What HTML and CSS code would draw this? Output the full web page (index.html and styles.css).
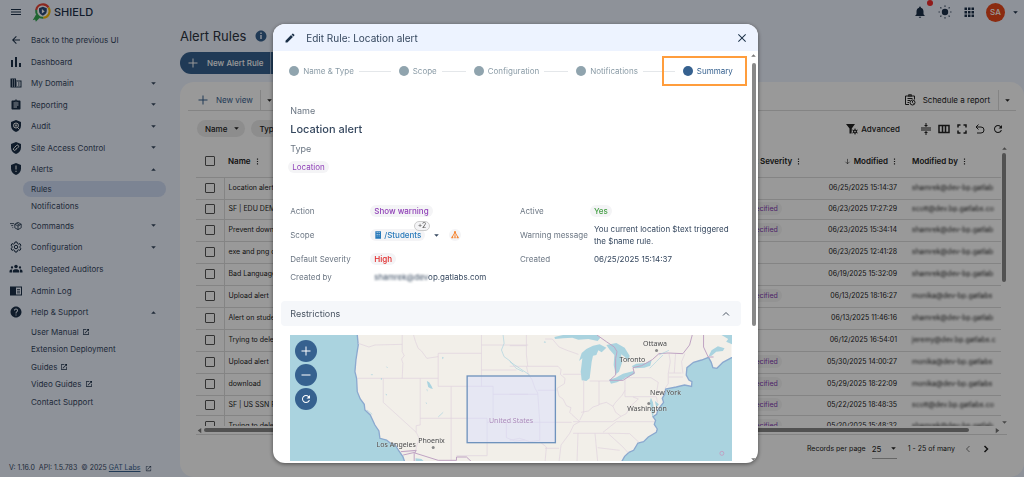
FILE: index.html
```html
<!DOCTYPE html>
<html lang="en">
  <head>
    <meta charset="UTF-8" />
    <meta name="viewport" content="width=device-width, initial-scale=1.0" />
    <title>SHIELD - Alert Rules</title>
    <link rel="stylesheet" href="styles.css">
  </head>
  <body>
    <svg class="sprite" aria-hidden="true">
      <symbol id="menu" viewBox="0 0 24 24"><path d="M2 18h20v-2H2zM2 13h20v-2H2zM2 8h20V6H2z" /></symbol>
      <symbol id="back" viewBox="0 0 24 24"><path d="M20 11H7.83l5.59-5.59L12 4l-8 8 8 8 1.41-1.41L7.83 13H20v-2z" /></symbol>
      <symbol id="chart" viewBox="0 0 24 24"><path d="M2 8h4v14H2zM10 2h4v20h-4zM18 14h4v8h-4z" /></symbol>
      <symbol id="domain" viewBox="0 0 24 24"><path d="M12 7V3H1v18h22V7H12zM6 19H4v-2h2v2zm0-4H4v-2h2v2zm0-4H4V9h2v2zm0-4H4V5h2v2zm4 12H8v-2h2v2zm0-4H8v-2h2v2zm0-4H8V9h2v2zm0-4H8V5h2v2zm11 12h-9v-2h2v-2h-2v-2h2v-2h-2V9h9v10zm-2-8h-3v2h3v-2zm0 4h-3v2h3v-2z" /></symbol>
      <symbol id="report" viewBox="0 0 24 24"><path d="M19 3h-4.18C14.4 1.84 13.3 1 12 1c-1.3 0-2.4.84-2.82 2H5c-1.1 0-2 .9-2 2v14c0 1.1.9 2 2 2h14c1.1 0 2-.9 2-2V5c0-1.1-.9-2-2-2zm-7 0c.55 0 1 .45 1 1s-.45 1-1 1-1-.45-1-1 .45-1 1-1zm2 14H7v-2h7v2zm3-4H7v-2h10v2zm0-4H7V7h10v2z" /></symbol>
      <symbol id="audit" viewBox="0 0 24 24">
        <path d="M12 0 2 4v7c0 6 4 11 10 13 6-2 10-7 10-13V4z" />
        <circle class="knock" cx="12" cy="11" r="5" /><circle class="knock" cx="12" cy="11" r="1.5" /><path class="knock" d="m15 15 4 4" />
      </symbol>
      <symbol id="access" viewBox="0 0 24 24">
        <path d="M12 0 2 4v7c0 6 4 11 10 13 6-2 10-7 10-13V4z" />
        <path class="knock" d="m10 10 3-3a2.4 2.4 0 0 1 3.500 3.500l-2 2M14 12l-3 4a2.400 2.400 0 0 1-3.500-3.500l2-2" />
      </symbol>
      <symbol id="alert" viewBox="0 0 24 24">
        <path d="M12 0 2 4v7c0 6 4 11 10 13 6-2 10-7 10-13V4z" />
        <path class="knock" d="M12 5v8M12 15.500v2.500" />
      </symbol>
      <symbol id="commands" viewBox="0 0 30 24">
        <path class="line" d="M0 6h10M3 11h5M6 16h2M20 3l8 4.500v9L20 21l-8-4.500v-9zM12 7.500l8 4.500 8-4.500M20 12v9M16 5l8 4.500" />
      </symbol>
      <symbol id="gear" viewBox="0 0 24 24">
        <path class="line" d="M10 2h4l.7 3 2.300 1.300 3-1 2 3.500-2.300 2v2.400l2.300 2-2 3.500-3-1L14.700 19l-.7 3h-4l-.7-3L7 17.700l-3 1-2-3.500 2.300-2v-2.400L2 8.800l2-3.500 3 1L9.300 5z" />
        <circle class="line" cx="12" cy="12" r="3.500" />
      </symbol>
      <symbol id="groups" viewBox="0 0 24 24">
        <circle cx="12" cy="7" r="3.500" /><circle cx="4" cy="9" r="2.300" /><circle cx="20" cy="9" r="2.300" />
        <path d="M5.500 19v-3c0-5 13-5 13 0v3zM-1 19v-3c0-2 2-3.500 5.500-3.200C3.800 14 4 16 4 19zM25 19v-3c0-2-2-3.500-5.500-3.200.7 1.200.5 3.200.5 6.200z" />
      </symbol>
      <symbol id="log" viewBox="0 0 24 24"><path fill-rule="evenodd" d="M0 3h24v18H0zM12 5v14h10V5zM14 8h6v1.500h-6zM14 11.500h6V13h-6zM14 15h6v1.500h-6z" /></symbol>
      <symbol id="help" viewBox="0 0 24 24"><path d="M12 1C6 1 1 6 1 12s5 11 11 11 11-5 11-11S18 1 12 1zm1 18h-2v-2h2v2zm2.070-7.750l-.9.920C13.450 12.900 13 13.500 13 15h-2v-.5c0-1.100.45-2.100 1.170-2.830l1.240-1.260c.37-.36.59-.86.59-1.410 0-1.100-.9-2-2-2s-2 .9-2 2H8c0-2.210 1.790-4 4-4s4 1.790 4 4c0 .88-.36 1.680-.93 2.250z" /></symbol>
      <symbol id="info" viewBox="0 0 24 24"><path d="M12 1C6 1 1 6 1 12s5 11 11 11 11-5 11-11S18 1 12 1zm1.500 17h-3v-8h3v8zm0-10h-3V5h3v3z" /></symbol>
      <symbol id="external" viewBox="0 0 24 24"><path d="M19 19H5V5h7V3H5c-1.110 0-2 .9-2 2v14c0 1.100.89 2 2 2h14c1.100 0 2-.9 2-2v-7h-2v7zM14 3v2h3.590l-9.830 9.830 1.410 1.410L19 6.410V10h2V3h-7z" /></symbol>
      <symbol id="bell" viewBox="0 0 24 24"><path d="M12 22c1.100 0 2-.9 2-2h-4c0 1.100.89 2 2 2zm6-6v-5c0-3.070-1.640-5.640-4.500-6.320V4c0-.83-.67-1.500-1.500-1.500s-1.500.67-1.500 1.500v.68C7.630 5.360 6 7.920 6 11v5l-2 2v1h16v-1l-2-2z" /></symbol>
      <symbol id="sun" viewBox="0 0 24 24">
        <circle cx="12" cy="12" r="5.500" />
        <path class="line" d="M12 1v2M12 21v2M1 12h2M21 12h2M4.200 4.200l1.500 1.500M18.300 18.300l1.500 1.500M4.200 19.800l1.500-1.500M18.300 5.700l1.500-1.500" />
      </symbol>
      <symbol id="apps" viewBox="0 0 24 24"><path d="M3 3h5v5H3zM10 3h5v5h-5zM17 3h5v5h-5zM3 10h5v5H3zM10 10h5v5h-5zM17 10h5v5h-5zM3 17h5v5H3zM10 17h5v5h-5zM17 17h5v5h-5z" /></symbol>
      <symbol id="edit" viewBox="0 0 24 24"><path d="M3 17.250V21h3.750L17.810 9.940l-3.750-3.750L3 17.250zM20.710 7.040c.39-.39.39-1.020 0-1.410l-2.340-2.340c-.39-.39-1.020-.39-1.410 0l-1.830 1.830 3.750 3.750 1.830-1.830z" /></symbol>
      <symbol id="close" viewBox="0 0 24 24"><path d="M20 5.400 18.600 4 12 10.600 5.400 4 4 5.400l6.600 6.600L4 18.600 5.400 20l6.600-6.600 6.600 6.600 1.400-1.400-6.600-6.600z" /></symbol>
      <symbol id="plus" viewBox="0 0 24 24"><path d="M21 13h-8v8h-2v-8H3v-2h8V3h2v8h8z" /></symbol>
      <symbol id="minus" viewBox="0 0 24 24"><path d="M3 11h18v2H3z" /></symbol>
      <symbol id="refresh" viewBox="0 0 24 24"><path d="M17.650 6.350C16.200 4.900 14.210 4 12 4c-4.420 0-7.990 3.580-7.990 8s3.570 8 7.990 8c3.730 0 6.840-2.550 7.730-6h-2.080c-.82 2.330-3.040 4-5.650 4-3.310 0-6-2.690-6-6s2.690-6 6-6c1.660 0 3.140.69 4.220 1.780L13 11h7V4l-2.350 2.350z" /></symbol>
      <symbol id="undo" viewBox="0 0 24 24"><path class="line" d="M9 3 4 8l5 5M4 8h10a5.500 5.500 0 0 1 0 12H6" /></symbol>
      <symbol id="full" viewBox="0 0 24 24"><path class="line bold-line" d="M4 9V4h5M15 4h5v5M20 15v5h-5M9 20H4v-5" /></symbol>
      <symbol id="columns" viewBox="0 0 24 24"><path class="line bold-line" d="M2 5h20v14H2zM9 5v14M15 5v14" /></symbol>
      <symbol id="density" viewBox="0 0 24 24"><path class="line" d="M2 10h20M2 14h20" /><path d="M11 0h2v4h3l-4 4-4-4h3zM11 24h2v-4h3l-4-4-4 4h3z" /></symbol>
      <symbol id="filter" viewBox="0 0 24 24">
        <path d="M0 2h18l-6.500 9v4L11 21H7V11z" />
        <circle cx="18" cy="17" r="4" /><path class="line" d="M18 11v12M12.800 14l10.400 6M12.800 20l10.400-6" /><circle class="knock" cx="18" cy="17" r="1" />
      </symbol>
      <symbol id="schedule" viewBox="0 0 24 24">
        <path class="line" d="M10 21H3V4h18v7M8 4h8M7 9h10M7 13h5M7 17h3M9 3V1.500h6V3" />
        <circle class="line" cx="17" cy="17" r="5" /><path class="line" d="M17 14v3l2 2" />
      </symbol>
      <symbol id="more" viewBox="0 0 24 24"><path d="M10 2h4v4h-4zM10 10h4v4h-4zM10 18h4v4h-4z" /></symbol>
      <symbol id="sort" viewBox="0 0 24 24"><path class="line" d="M12 3v17M5 13l7 7 7-7" /></symbol>
      <symbol id="down" viewBox="0 0 24 24"><path d="M4 8l8 8 8-8z" /></symbol>
      <symbol id="up" viewBox="0 0 24 24"><path d="M4 16l8-8 8 8z" /></symbol>
      <symbol id="left" viewBox="0 0 24 24"><path d="M18 3 6 12l12 9z" /></symbol>
      <symbol id="right" viewBox="0 0 24 24"><path d="m6 3 12 9-12 9z" /></symbol>
      <symbol id="prev" viewBox="0 0 24 24"><path class="line" d="m15 6-6 6 6 6" /></symbol>
      <symbol id="next" viewBox="0 0 24 24"><path class="line bold-line" d="m9 6 6 6-6 6" /></symbol>
      <symbol id="collapse" viewBox="0 0 24 24"><path class="line" d="m6 15 6-6 6 6" /></symbol>
      <symbol id="unit" viewBox="0 0 24 24"><path fill-rule="evenodd" d="M4 1h17v22H4zM8 4v2h3V4zM14 4v2h3V4zM8 9v2h3V9zM14 9v2h3V9zM8 14v2h3v-2zM14 14v2h3v-2z" /></symbol>
      <symbol id="tree" viewBox="0 0 24 24"><path class="line bold-line" d="M12 4 3 19M12 4l9 15M12 10v9" /><path d="M9 1h6v6H9zM1 17h6v5H1zM10 17h4v5h-4zM17 17h6v5h-6z" /></symbol>
    </svg>

    <div class="app">
      <header class="topbar">
        <button class="icon-button" aria-label="Menu"><svg class="icon"><use href="#menu" /></svg></button>
        <a class="brand" href="#">
          <svg class="logo" viewBox="0 0 54 54" aria-hidden="true">
            <path d="M12 32 22 42 11 53 9 47 2 49z" fill="#34a853" />
            <circle cx="31" cy="23" r="20" fill="#fff" />
            <path d="M12 20A19 19 0 0 1 47 13" fill="none" stroke="#ea4335" stroke-width="6" />
            <path d="M47 13A19 19 0 0 1 32 42" fill="none" stroke="#fbbc05" stroke-width="6" />
            <path d="M32 42A19 19 0 0 1 12 20" fill="none" stroke="#34a853" stroke-width="6" />
            <path d="M31 11 20 15v8c0 6 5 11 11 13 6-2 11-7 11-13v-8z" fill="#2b4a78" />
            <path d="M28 17v13l8-6z" fill="#fff" />
          </svg>
          <span>SHIELD</span>
        </a>
        <div class="account">
          <button class="icon-button bell" aria-label="Notifications"><svg class="icon large"><use href="#bell" /></svg><i class="dot"></i></button>
          <button class="icon-button" aria-label="Theme"><svg class="icon large"><use href="#sun" /></svg></button>
          <button class="icon-button" aria-label="Apps"><svg class="icon"><use href="#apps" /></svg></button>
          <button class="avatar">SA</button>
          <button class="icon-button" aria-label="Account menu"><svg class="icon tiny"><use href="#down" /></svg></button>
        </div>
      </header>

      <aside class="sidebar">
        <nav>
          <a href="#"><svg class="icon"><use href="#back" /></svg>Back to the previous UI</a>
          <a href="#"><svg class="icon"><use href="#chart" /></svg>Dashboard</a>
          <a href="#"><svg class="icon"><use href="#domain" /></svg>My Domain<svg class="icon tiny caret"><use href="#down" /></svg></a>
          <a href="#"><svg class="icon"><use href="#report" /></svg>Reporting<svg class="icon tiny caret"><use href="#down" /></svg></a>
          <a href="#"><svg class="icon"><use href="#audit" /></svg>Audit<svg class="icon tiny caret"><use href="#down" /></svg></a>
          <a href="#"><svg class="icon"><use href="#access" /></svg>Site Access Control<svg class="icon tiny caret"><use href="#down" /></svg></a>
          <a href="#"><svg class="icon"><use href="#alert" /></svg>Alerts<svg class="icon tiny caret"><use href="#up" /></svg></a>
          <a class="sub active" href="#">Rules</a>
          <a class="sub" href="#">Notifications</a>
          <a href="#"><svg class="icon"><use href="#commands" /></svg>Commands<svg class="icon tiny caret"><use href="#down" /></svg></a>
          <a href="#"><svg class="icon"><use href="#gear" /></svg>Configuration<svg class="icon tiny caret"><use href="#down" /></svg></a>
          <a href="#"><svg class="icon"><use href="#groups" /></svg>Delegated Auditors</a>
          <a href="#"><svg class="icon"><use href="#log" /></svg>Admin Log</a>
          <a href="#"><svg class="icon"><use href="#help" /></svg>Help &amp; Support<svg class="icon tiny caret"><use href="#up" /></svg></a>
          <a class="sub" href="#">User Manual <svg class="icon small"><use href="#external" /></svg></a>
          <a class="sub" href="#">Extension Deployment</a>
          <a class="sub" href="#">Guides <svg class="icon small"><use href="#external" /></svg></a>
          <a class="sub" href="#">Video Guides <svg class="icon small"><use href="#external" /></svg></a>
          <a class="sub" href="#">Contact Support</a>
        </nav>
        <footer class="version">
          <span>V: 1.16.0</span><span>API: 1.5.783</span><span>© 2025 <a href="#">GAT Labs</a></span>
          <svg class="icon tiny"><use href="#external" /></svg>
        </footer>
      </aside>

      <main class="content">
        <div class="title">
          <h1>Alert Rules</h1>
          <svg class="icon"><use href="#info" /></svg>
        </div>
        <div class="new-rule">
          <button><svg class="icon"><use href="#plus" /></svg>New Alert Rule</button>
          <button aria-label="More"><svg class="icon tiny"><use href="#down" /></svg></button>
        </div>

        <section class="panel">
          <div class="views">
            <button class="view"><svg class="icon"><use href="#plus" /></svg>New view</button>
            <button class="split" aria-label="Views"><svg class="icon tiny"><use href="#down" /></svg></button>
            <button class="schedule"><svg class="icon"><use href="#schedule" /></svg>Schedule a report</button>
            <button class="split" aria-label="Reports"><svg class="icon tiny"><use href="#down" /></svg></button>
          </div>
          <div class="filters">
            <button class="filter">Name<svg class="icon tiny"><use href="#down" /></svg></button>
            <button class="filter">Type<svg class="icon tiny"><use href="#down" /></svg></button>
            <button class="advanced"><svg class="icon"><use href="#filter" /></svg>Advanced</button>
            <button class="icon-button" aria-label="Density"><svg class="icon"><use href="#density" /></svg></button>
            <button class="icon-button" aria-label="Columns"><svg class="icon"><use href="#columns" /></svg></button>
            <button class="icon-button" aria-label="Full screen"><svg class="icon"><use href="#full" /></svg></button>
            <button class="icon-button" aria-label="Undo"><svg class="icon"><use href="#undo" /></svg></button>
            <button class="icon-button" aria-label="Refresh"><svg class="icon"><use href="#refresh" /></svg></button>
          </div>

          <div class="grid">
            <div class="grid-view">
              <table>
                <colgroup><col class="col-check" /><col /><col class="col-severity" /><col class="col-modified" /><col class="col-by" /></colgroup>
                <thead>
                  <tr>
                    <th><input type="checkbox" aria-label="Select all" /></th>
                    <th>Name <svg class="icon tiny"><use href="#more" /></svg></th>
                    <th>Default Severity <svg class="icon tiny"><use href="#more" /></svg></th>
                    <th class="right"><svg class="icon tiny"><use href="#sort" /></svg> Modified <svg class="icon tiny"><use href="#more" /></svg></th>
                    <th>Modified by <svg class="icon tiny"><use href="#more" /></svg></th>
                  </tr>
                </thead>
                <tbody>
                  <tr><td><input type="checkbox" aria-label="Select row" /></td><td>Location alert</td><td></td><td>06/25/2025 15:14:37</td><td><span class="masked">shamrek@dev-bp.gatlab</span></td></tr>
                  <tr class="short"><td><input type="checkbox" aria-label="Select row" /></td><td>SF | EDU DEMO</td><td><span class="tag">Unspecified</span></td><td>06/23/2025 17:27:29</td><td><span class="masked">scott@dev.bp.gatlabs.co</span></td></tr>
                  <tr><td><input type="checkbox" aria-label="Select row" /></td><td>Prevent download</td><td><span class="tag">Unspecified</span></td><td>06/23/2025 15:34:14</td><td><span class="masked">shamrek@dev-bp.gatlab</span></td></tr>
                  <tr><td><input type="checkbox" aria-label="Select row" /></td><td>exe and png download</td><td></td><td>06/23/2025 12:41:28</td><td><span class="masked">shamrek@dev-bp.gatlab</span></td></tr>
                  <tr><td><input type="checkbox" aria-label="Select row" /></td><td>Bad Language</td><td></td><td>06/19/2025 15:32:09</td><td><span class="masked">shamrek@dev-bp.gatlab</span></td></tr>
                  <tr><td><input type="checkbox" aria-label="Select row" /></td><td>Upload alert</td><td><span class="tag">Unspecified</span></td><td>06/13/2025 18:16:27</td><td><span class="masked">monika@dev-bp.gatlabs</span></td></tr>
                  <tr><td><input type="checkbox" aria-label="Select row" /></td><td>Alert on students</td><td></td><td>06/13/2025 11:46:16</td><td><span class="masked">shamrek@dev-bp.gatlab</span></td></tr>
                  <tr><td><input type="checkbox" aria-label="Select row" /></td><td>Trying to delete</td><td></td><td>06/12/2025 16:54:01</td><td><span class="masked">jeremy@dev.bp.gatlabs.c</span></td></tr>
                  <tr><td><input type="checkbox" aria-label="Select row" /></td><td>Upload alert</td><td><span class="tag">Unspecified</span></td><td>05/30/2025 14:00:27</td><td><span class="masked">monika@dev-bp.gatlabs</span></td></tr>
                  <tr><td><input type="checkbox" aria-label="Select row" /></td><td>download</td><td><span class="tag">Unspecified</span></td><td>05/29/2025 18:22:09</td><td><span class="masked">monika@dev-bp.gatlabs</span></td></tr>
                  <tr class="short"><td><input type="checkbox" aria-label="Select row" /></td><td>SF | US SSN Rule</td><td><span class="tag">Unspecified</span></td><td>05/22/2025 18:48:35</td><td><span class="masked">scott@dev.bp.gatlabs.co</span></td></tr>
                  <tr><td><input type="checkbox" aria-label="Select row" /></td><td>Trying to delete</td><td><span class="tag">Unspecified</span></td><td>05/20/2025 15:48:32</td><td><span class="masked">shamrek@dev-bp.gatlab</span></td></tr>
                </tbody>
              </table>
            </div>
            <div class="scroll-y"><svg class="icon tiny"><use href="#up" /></svg><i class="thumb"></i><svg class="icon tiny"><use href="#down" /></svg></div>
            <div class="scroll-x"><svg class="icon tiny"><use href="#left" /></svg><i class="thumb"></i><svg class="icon tiny"><use href="#right" /></svg></div>
          </div>

          <div class="pager">
            <label for="page-size">Records per page</label>
            <span class="page-size">
              <select id="page-size"><option>25</option></select>
              <svg class="icon tiny"><use href="#down" /></svg>
            </span>
            <span class="range">1 - 25 of many</span>
            <button class="icon-button muted" aria-label="Previous page"><svg class="icon"><use href="#prev" /></svg></button>
            <button class="icon-button" aria-label="Next page"><svg class="icon"><use href="#next" /></svg></button>
          </div>
        </section>
      </main>
    </div>

    <div class="backdrop">
      <section class="modal" role="dialog" aria-labelledby="modal-title">
        <header class="modal-header">
          <svg class="icon"><use href="#edit" /></svg>
          <h2 id="modal-title">Edit Rule: Location alert</h2>
          <button class="icon-button" aria-label="Close"><svg class="icon"><use href="#close" /></svg></button>
        </header>

        <div class="modal-body">
          <div class="modal-content">
            <ol class="steps">
              <li>Name &amp; Type</li>
              <li>Scope</li>
              <li>Configuration</li>
              <li>Notifications</li>
              <li class="current">Summary</li>
            </ol>

            <dl class="summary">
              <dt>Name</dt>
              <dd class="rule-name">Location alert</dd>
              <dt>Type</dt>
              <dd class="rule-type"><span class="chip purple">Location</span></dd>
            </dl>

            <div class="details">
              <dl>
                <dt>Action</dt>
                <dd><span class="chip purple bold">Show warning</span></dd>
                <dt>Scope</dt>
                <dd class="scope">
                  <span class="chip blue"><svg class="icon small"><use href="#unit" /></svg>/Students<span class="count">+2</span></span>
                  <button class="icon-button" aria-label="Show scope"><svg class="icon tiny"><use href="#down" /></svg></button>
                  <span class="chip orange"><svg class="icon small"><use href="#tree" /></svg></span>
                </dd>
                <dt>Default Severity</dt>
                <dd><span class="chip red">High</span></dd>
                <dt>Created by</dt>
                <dd><span class="masked">shamrek@dev</span>op.gatlabs.com</dd>
              </dl>
              <dl>
                <dt>Active</dt>
                <dd><span class="chip green">Yes</span></dd>
                <dt>Warning message</dt>
                <dd>You current location $text triggered the $name rule.</dd>
                <dt>Created</dt>
                <dd>06/25/2025 15:14:37</dd>
              </dl>
            </div>

            <button class="accordion">Restrictions<svg class="icon"><use href="#collapse" /></svg></button>

            <div class="map">
              <svg viewBox="0 0 1326 378" preserveAspectRatio="none" aria-hidden="true">
                <rect class="land" width="1326" height="378" />
                <g transform="translate(-45 -30)">
                  <path class="water coast" d="M40 20H246L250 60 246 85 243 105 240 140 245 160 247 200 256 222 268 238 270 255 286 270 300 300 312 318 315 340 335 345 347 355 360 358 372 378 384 395 390 412H40z" />
                  <path class="state" d="M250 55 282 66 300 60 382 58M382 30V80L388 92 380 102 384 115 382 160M247 160H490M325 160V232L424 322 434 342 426 360 422 380 378 380M436 160V300L424 302V322M436 280H637M529 184V408M490 85V184H655M490 85H620M416 30 422 50 430 70 440 78 456 100 490 95M620 30V184M620 60H760M620 135H725M655 184V280M655 208H760M637 280V392H545M637 292H695M695 292V338L720 348 750 345" />
                  <path class="border" d="M378 380 424 376 420 384 490 406H545V396H575L590 410M385 390 420 382M418 384V410" />
                  <path class="water" d="M456 168 463 172 470 183 474 192 466 190 460 186zM452 232 456 234 455 238zM332 206 336 208 334 212zM422 400 440 402 448 410H422zM502 95 507 98 503 103zM318 158 322 162 318 165zM455 192 458 194 457 200z" />
                  <path class="river" d="M685 30 688 55 680 75 688 95 706 108 724 130 745 140M505 262 490 276M288 149H294M335 125 338 129M276 255 292 268" />
                </g>
                <g transform="translate(660 -30)">
                  <path class="water coast" d="M335 412 345 394 358 382 372 376 385 354 402 350 416 336 440 322 443 312 434 298 438 286 430 275 441 268 445 254 462 232 458 220 466 206 468 192 500 186 525 180 546 184 547 170 538 165 530 150 532 128 552 112 576 105 597 97 605 112 610 128 622 130 640 112 668 97 680 90V412z" />
                  <path class="water" d="M230 72 250 62 270 58 290 68 276 82 266 76 260 90 250 92 246 110 240 160 230 168 216 166 213 140 218 100 208 108 216 84zM290 60 320 54 345 68 360 92 356 110 345 95 334 88 338 110 328 140 318 148 312 120 314 90 300 74zM298 164 318 158 340 146 372 138 376 146 350 158 322 172 304 176zM366 124 380 116 408 114 426 106 422 122 404 128 376 130zM134 36 160 30H262L272 38 264 48 236 42 206 44 188 38 160 40 136 42zM102 52 106 48 108 54zM597 94 606 76 625 64 645 70 640 78 620 80 606 92zM636 30 668 30V58L650 50 656 42zM202 34 210 30 215 38zM424 218 430 232 434 262 428 276 424 250 420 232zM436 228 448 238 440 248z" />
                  <path class="state" d="M0 62H50M50 30V90L54 124H0M54 124H145L154 134 152 148 166 160 164 176 142 190 148 214 160 222 170 242 184 248 180 262 186 268 210 290 192 300 180 325 154 360 148 410M50 124 56 150 66 162 76 190 84 204 90 292H0M0 208H84M84 196H140M90 292H186M106 42 128 42 148 66 172 76 206 88M160 148H215M222 166V262L210 286M268 168V240L250 246 236 258 214 262M240 168H300M346 158V215H440M346 196 338 210 316 234 310 244 290 232 268 238M310 244 318 262 334 274 350 266 362 244 386 222 370 216M334 274 310 290 190 290M190 325H315L360 326 388 352M280 322 320 290H434M296 326 340 366 356 384M205 325 202 410M256 325 264 410M264 368 330 376M106 370H148M90 350 110 366 106 410M90 292V346L60 350 30 340 0 346M346 158H424L446 172 442 196 454 206M440 215 444 232M478 84 482 110 476 146V176M478 144H516M478 156H520M526 86 516 110 520 146M498 86 494 144M476 176 466 190" />
                  <path class="border" d="M262 30 290 50 314 66 322 80 318 100 318 150 300 166 340 166 374 144 370 128 396 122 428 104 448 86 476 84 520 86 540 60 548 30M582 30V66L596 96 612 96" />
                  <path class="river" d="M0 110 30 130 60 150M420 130 440 110 460 90M448 90 478 76" />
                  <circle class="border" cx="637" cy="385" r="6" />
                </g>
                <rect class="selection" x="532" y="123" width="265" height="200" />
              </svg>
              <span class="place country" style="left: 50%; top: 68%">United States</span>
              <span class="place" style="left: 24%; top: 87%">Los Angeles</span>
              <span class="place city" style="left: 32%; top: 84%">Phoenix</span>
              <span class="place" style="left: 77.5%; top: 20%">Toronto</span>
              <span class="place city" style="left: 82.6%; top: 7%">Ottawa</span>
              <span class="place" style="left: 85%; top: 46%">New York</span>
              <span class="place capital" style="left: 80.8%; top: 59%">Washington</span>
              <div class="map-controls">
                <button aria-label="Zoom in"><svg class="icon"><use href="#plus" /></svg></button>
                <button aria-label="Zoom out"><svg class="icon"><use href="#minus" /></svg></button>
                <button aria-label="Reset"><svg class="icon"><use href="#refresh" /></svg></button>
              </div>
            </div>
          </div>
          <div class="scroll-y"><svg class="icon tiny"><use href="#up" /></svg><i class="thumb"></i><svg class="icon tiny"><use href="#down" /></svg></div>
        </div>
      </section>
    </div>
  </body>
</html>
```
FILE: styles.css
```css
:root {
  --navy: #1b3048;
  --text: #36485f;
  --muted: #6b7683;
  --blue: #36618f;
  --tint: #edf3ff;
  --line: #dcdcdc;
}

* {
  box-sizing: border-box;
}

body {
  margin: 0;
  overflow: hidden;
  font-family: Inter, "Liberation Sans", sans-serif;
  font-size: 8px;
  line-height: 12px;
  color: var(--text);
  background-color: var(--tint);
}

button,
select {
  padding: 0;
  border: 0;
  font: inherit;
  color: inherit;
  background: none;
}

a {
  color: inherit;
  text-decoration: none;
}

h1,
h2,
dl,
dd,
ol {
  margin: 0;
  padding: 0;
  font-weight: 400;
}

.sprite {
  position: absolute;
  width: 0;
  height: 0;
}

.icon {
  flex: none;
  width: 12px;
  height: 12px;
  fill: currentColor;
  overflow: visible;
}
.icon.large {
  width: 14px;
  height: 14px;
}
.icon.small {
  width: 8px;
  height: 8px;
}
.icon.tiny {
  width: 7px;
  height: 7px;
}

symbol {
  overflow: visible;
}
.line {
  fill: none;
  stroke: currentColor;
  stroke-width: 2;
}
.bold-line {
  stroke-width: 3;
}
.knock {
  fill: none;
  stroke: #fff;
  stroke-width: 2;
}

.icon-button {
  display: flex;
}

/* Layout */
.app {
  display: grid;
  grid-template-columns: 180px 1fr;
  grid-template-rows: 24px 1fr;
  height: 100vh;
}

.topbar {
  grid-column: 1 / 3;
  display: flex;
  align-items: center;
  padding: 0 5px 0 10px;
  color: var(--navy);
}
.brand {
  display: flex;
  align-items: center;
  gap: 3px;
  margin-left: 10px;
  font-size: 11px;
  font-weight: 500;
}
.logo {
  width: 19px;
  height: 19px;
}
.account {
  display: flex;
  align-items: center;
  gap: 11px;
  margin-left: auto;
}
.bell {
  position: relative;
}
.dot {
  position: absolute;
  top: -5px;
  right: -6px;
  width: 6px;
  height: 6px;
  border-radius: 50%;
  background-color: #f22c2c;
}
.avatar {
  width: 19px;
  height: 19px;
  border-radius: 50%;
  font-weight: 500;
  color: #fff;
  background-color: #e8481c;
}
.avatar + .icon-button {
  margin-left: -4px;
}

/* Sidebar */
.sidebar {
  display: flex;
  flex-direction: column;
  padding: 6px 14px 3px 9px;
}
.sidebar nav {
  flex: 1;
  display: flex;
  flex-direction: column;
  justify-content: space-between;
}
.sidebar nav a {
  display: flex;
  align-items: center;
  gap: 9px;
  height: 20px;
  padding: 0 9px 0 1px;
}
.sidebar nav > a > .icon:first-child {
  color: var(--navy);
}
.sidebar .caret {
  margin-left: auto;
}
.sidebar nav .sub {
  gap: 3px;
  height: 16px;
  margin-left: 14px;
  padding-left: 8px;
  border-radius: 8px;
}
.sidebar nav .active {
  background-color: #cfdcf5;
}
.version {
  display: flex;
  align-items: center;
  gap: 4px;
  margin-top: 52px;
  font-size: 7px;
}
.version a {
  color: var(--blue);
  text-decoration: underline;
}

/* Content */
.content {
  display: flex;
  flex-direction: column;
  min-width: 0;
}
.title {
  display: flex;
  align-items: center;
  gap: 9px;
  height: 24px;
  color: var(--blue);
}
.title h1 {
  font-size: 13px;
  color: #2c3440;
}
.new-rule {
  display: flex;
  align-self: flex-start;
  margin-top: 4px;
  border-radius: 11px;
  overflow: hidden;
  font-weight: 500;
  color: #fff;
  background-color: var(--blue);
}
.new-rule button {
  display: flex;
  align-items: center;
  gap: 8px;
  height: 22px;
  padding: 0 6px 0 7px;
}
.new-rule button + button {
  border-left: 1px solid #9db4cf;
}

.panel {
  flex: 1;
  display: flex;
  flex-direction: column;
  margin-top: 8px;
  padding: 8px 8px 0;
  border-radius: 14px;
  color: #222;
  background-color: #fff;
}
.views {
  display: flex;
  align-items: center;
  border-bottom: 1px solid var(--line);
}
.views button {
  display: flex;
  align-items: center;
  gap: 7px;
  height: 20px;
}
.views .view {
  padding: 0 7px 0 9px;
  color: var(--blue);
}
.views .split {
  padding: 0 5px;
  border-left: 1px solid var(--line);
}
.views .schedule {
  margin-left: auto;
  padding-right: 8px;
}
.filters {
  display: flex;
  align-items: center;
  gap: 6px;
  padding: 9px 12px 0 9px;
}
.filter {
  display: flex;
  align-items: center;
  gap: 6px;
  height: 17px;
  padding: 0 5px 0 8px;
  border-radius: 9px;
  font-weight: 500;
  background-color: #ebebeb;
}
.advanced {
  display: flex;
  align-items: center;
  gap: 3px;
  margin: 0 14px 0 auto;
  font-weight: 500;
}

.grid {
  flex: 1;
  display: grid;
  grid-template-columns: 1fr 6px;
  grid-template-rows: 1fr 8px;
  margin: 8px 9px 0 8px;
  border-bottom: 1px solid var(--line);
}
.grid-view {
  overflow: hidden;
  height: 0;
  min-height: 100%;
}
table {
  width: 100%;
  table-layout: fixed;
  border-collapse: collapse;
}
.col-check {
  width: 28px;
}
.col-severity {
  width: 88px;
}
.col-modified {
  width: 85px;
}
.col-by {
  width: 102px;
}
th,
td {
  height: 22px;
  padding: 0 4px;
  border-bottom: 1px solid var(--line);
  text-align: left;
  white-space: nowrap;
  font-size: 7px;
  line-height: 12px;
}
th {
  height: 32px;
  font-size: 8px;
  font-weight: 600;
}
th .icon {
  margin: 0 1px;
  vertical-align: -1px;
}
th.right {
  text-align: right;
}
td:first-child {
  border-right: 1px solid var(--line);
}
td:nth-child(4) {
  padding-right: 2px;
  text-align: right;
}
th:nth-child(4) {
  padding-right: 0;
}
td:nth-child(5),
th:nth-child(5) {
  padding: 0 0 0 13px;
}
.short td {
  height: 20px;
}
table input {
  appearance: none;
  display: block;
  width: 10px;
  height: 10px;
  margin: 0 auto;
  border: 1px solid #555;
  border-radius: 1px;
}
.tag {
  margin-left: 4px;
  padding: 2px 4px;
  border-radius: 8px;
  color: #8335b0;
  background-color: #f5f5f5;
}
.masked {
  filter: blur(1px);
}

.scroll-y,
.scroll-x {
  display: flex;
  align-items: center;
  gap: 1px;
  color: #777;
}
.scroll-y {
  flex-direction: column;
}
.scroll-x .thumb {
  width: 95%;
  height: 4px;
  margin-right: auto;
  border-radius: 2px;
  background-color: #888;
}
.scroll-y .thumb {
  width: 4px;
  height: 46%;
  margin-bottom: auto;
  border-radius: 2px;
  background-color: #888;
}

.pager {
  display: flex;
  align-items: center;
  justify-content: flex-end;
  gap: 6px;
  height: 42px;
  padding: 0 24px 14px 0;
  font-size: 7px;
}
.page-size {
  display: flex;
  align-items: center;
  width: 25px;
  height: 20px;
  border-bottom: 1px solid #aaa;
}
.page-size select {
  flex: 1;
  appearance: none;
  font-size: 8px;
}
.range {
  margin: 0 1px 0 5px;
}
.muted {
  opacity: 0.6;
}

/* Dialog */
.backdrop {
  position: fixed;
  inset: 0;
  display: flex;
  padding: 24px 26vw 14px;
  background-color: rgba(0, 0, 0, 0.4);
}
.modal {
  flex: 1;
  display: flex;
  flex-direction: column;
  min-width: 0;
  margin-left: 7px;
  border-radius: 12px;
  overflow: hidden;
  background-color: #fff;
  box-shadow: 0 1px 4px rgba(0, 0, 0, 0.5);
}
.modal-header {
  display: flex;
  align-items: center;
  gap: 10px;
  height: 27px;
  padding: 0 10px 0 11px;
  color: var(--navy);
  background-color: var(--tint);
}
.modal-header h2 {
  font-size: 10px;
  color: var(--text);
}
.modal-header .icon-button {
  margin-left: auto;
}
.modal-body {
  flex: 1;
  display: flex;
  min-height: 0;
}
.modal-content {
  flex: 1;
  min-width: 0;
  padding: 14px 9px 0 8px;
}
.modal-body .scroll-y {
  width: 8px;
  padding-top: 1px;
}
.modal-body .scroll-y .thumb {
  height: 64%;
  margin-top: 3px;
}

.steps {
  display: flex;
  align-items: center;
  gap: 4px;
  padding: 0 8px;
  list-style: none;
  font-size: 8px;
  color: #8a9ba6;
}
.steps li {
  display: flex;
  flex: 4 0 auto;
  align-items: center;
  gap: 4px;
}
.steps li:nth-child(2),
.steps li:nth-child(3) {
  flex-grow: 3;
}
.steps li::before {
  content: "";
  width: 10px;
  height: 10px;
  border-radius: 50%;
  background-color: #90a4ae;
}
.steps li:not(:last-child)::after {
  content: "";
  flex: 1;
  height: 1px;
  margin: 0 4px 0 1px;
  background-color: #e4e7ea;
}
.steps .current {
  flex: none;
  position: relative;
  color: var(--blue);
}
.steps .current::before {
  background-color: var(--blue);
}
.steps .current::after {
  content: "";
  position: absolute;
  inset: -9px -14px -9px -21px;
  border: 2px solid #ff9d3c;
}

.summary {
  padding: 27px 9px 0;
  font-size: 9px;
  line-height: 14px;
}
dt {
  color: var(--muted);
}
.summary .rule-name {
  padding: 4px 0 6px;
  font-size: 11px;
  font-weight: 500;
}
.summary .rule-type {
  padding: 4px 0 0 2px;
}

.chip {
  position: relative;
  display: inline-flex;
  align-items: center;
  gap: 2px;
  height: 12px;
  margin-left: -4px;
  padding: 0 4px;
  border-radius: 6px;
  font-size: 8px;
  background-color: #f4f4f6;
}
.purple {
  color: #9040b8;
}
.bold,
.red,
.green,
.blue {
  font-weight: 500;
}
.blue {
  color: #2779ba;
}
.red {
  color: #e22626;
}
.green {
  color: #46a046;
}
.orange {
  margin-left: 1px;
  padding: 0 2px;
  color: #f58634;
}
.count {
  position: absolute;
  top: -8px;
  right: -5px;
  padding: 0 3px;
  border: 1px solid #ccc;
  border-radius: 6px;
  font-size: 7px;
  font-weight: 400;
  line-height: 8px;
  color: #555;
  background-color: #f4f4f6;
}

.details {
  display: grid;
  grid-template-columns: 1fr 1fr;
  align-items: start;
  padding: 27px 9px 0;
}
.details dl {
  display: grid;
  grid-template-columns: 84px 1fr;
  grid-template-rows: 20px 28px 20px 16px;
  align-items: center;
}
.details dl + dl {
  grid-template-columns: 74px 1fr;
  margin-left: 9px;
}
.scope {
  display: flex;
  align-items: center;
  gap: 8px;
}

.accordion {
  display: flex;
  align-items: center;
  justify-content: space-between;
  width: 100%;
  height: 25px;
  margin-top: 16px;
  padding: 0 9px;
  border-radius: 4px;
  font-size: 9px;
  color: #4a5563;
  background-color: #f5f7fa;
}

.map {
  position: relative;
  height: 126px;
  margin: 9px 9px 0;
  overflow: hidden;
}
.map > svg {
  display: block;
  width: 100%;
  height: 100%;
}
.land {
  fill: #f2efe9;
}
.water {
  fill: #aad3df;
}
.coast {
  stroke: #8ba9cf;
  stroke-width: 4;
}
.state,
.border,
.river {
  fill: none;
  stroke: #e0d2de;
  stroke-width: 2;
}
.border {
  stroke: #bfa3c3;
  stroke-width: 3;
}
.river {
  stroke: #aad3df;
}
.selection {
  fill: rgba(215, 222, 255, 0.45);
  stroke: #6f93bd;
  stroke-width: 4;
}
.place {
  position: absolute;
  translate: -50% -50%;
  font-family: "Noto Sans", sans-serif;
  font-size: 7px;
  line-height: 8px;
  white-space: nowrap;
  color: #444;
  text-shadow: 0 0 1px #fff;
}
.country {
  color: #a585b8;
}
.city::after,
.capital::before {
  content: "";
  position: absolute;
  top: 9px;
  left: 50%;
  width: 3px;
  height: 3px;
  border-radius: 50%;
  background-color: #888;
}
.capital::before {
  top: -3px;
}
.map-controls {
  position: absolute;
  top: 5px;
  left: 5px;
  display: flex;
  flex-direction: column;
  gap: 2px;
}
.map-controls button {
  display: flex;
  align-items: center;
  justify-content: center;
  width: 22px;
  height: 22px;
  border-radius: 50%;
  color: #fff;
  background-color: var(--blue);
}
```
